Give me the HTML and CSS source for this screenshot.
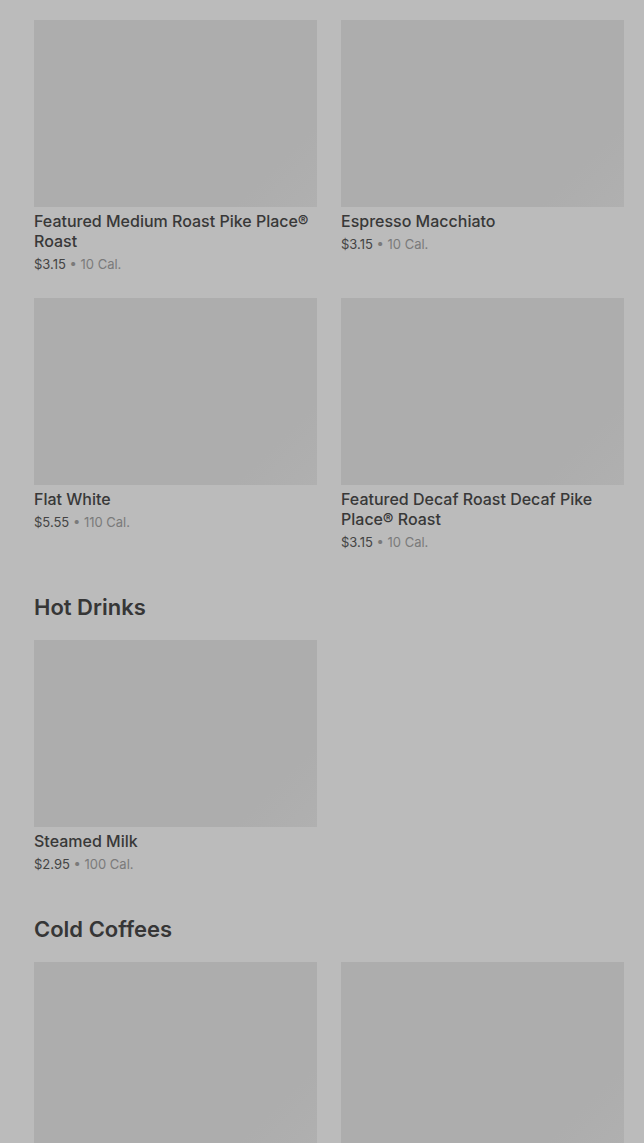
FILE: index.html
```html
<!DOCTYPE html>
<html>
<head>
<meta name="viewport" content="width=device-width, initial-scale=1">
<title>Menu</title>
<link rel="stylesheet" href="styles.css">
</head>
<body>
<div class="menu">
  <div class="grid">
    <div class="item">
      <div class="photo"></div>
      <div class="name">Featured Medium Roast Pike Place® Roast</div>
      <div class="meta"><span class="price">$3.15</span> • 10 Cal.</div>
    </div>
    <div class="item">
      <div class="photo"></div>
      <div class="name">Espresso Macchiato</div>
      <div class="meta"><span class="price">$3.15</span> • 10 Cal.</div>
    </div>
    <div class="item">
      <div class="photo"></div>
      <div class="name">Flat White</div>
      <div class="meta"><span class="price">$5.55</span> • 110 Cal.</div>
    </div>
    <div class="item">
      <div class="photo"></div>
      <div class="name">Featured Decaf Roast Decaf Pike Place® Roast</div>
      <div class="meta"><span class="price">$3.15</span> • 10 Cal.</div>
    </div>
  </div>

  <h2 class="section">Hot Drinks</h2>
  <div class="grid">
    <div class="item">
      <div class="photo"></div>
      <div class="name">Steamed Milk</div>
      <div class="meta"><span class="price">$2.95</span> • 100 Cal.</div>
    </div>
  </div>

  <h2 class="section">Cold Coffees</h2>
  <div class="grid">
    <div class="item">
      <div class="photo"></div>
    </div>
    <div class="item">
      <div class="photo"></div>
    </div>
  </div>
</div>
</body>
</html>
```

FILE: styles.css
```css
body {
  margin: 0;
  background-color: #bbbbbb;
  font-family: Inter, "Noto Sans", Arial, sans-serif;
  color: #363636;
}

.menu {
  padding: 20px 20px 40px 34px;
}

.grid {
  display: grid;
  grid-template-columns: 283px 283px;
  column-gap: 24px;
  row-gap: 24px;
}

.photo {
  height: 187px;
  background: linear-gradient(135deg, #adadad 82%, #b0b0b0 100%);
}

.name {
  margin-top: 4px;
  font-size: 16px;
  font-weight: 500;
  line-height: 20px;
  color: #383838;
}

.meta {
  margin-top: 3px;
  font-size: 13px;
  line-height: 20px;
  color: #7a7a7a;
}

.meta .price {
  color: #444444;
}

.section {
  margin: 41px 0 19px 0;
  font-size: 22px;
  font-weight: 600;
  line-height: 28px;
  color: #363636;
}
```
